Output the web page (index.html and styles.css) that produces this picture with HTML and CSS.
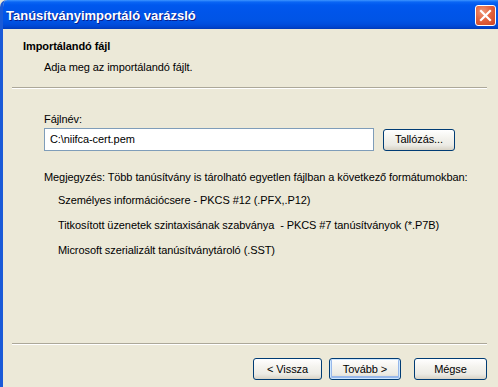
FILE: index.html
```html
<!DOCTYPE html>
<html lang="hu">
<head>
<meta charset="utf-8">
<title>Tanúsítványimportáló varázsló</title>
<link rel="stylesheet" href="styles.css">
</head>
<body>
<div class="window">
  <div class="titlebar">
    <span class="title">Tanúsítványimportáló varázsló</span>
    <span class="close" aria-label="Bezárás">
      <svg width="21" height="21" viewBox="0 0 21 21">
        <path d="M6 6 L15 15 M15 6 L6 15" stroke="#fff" stroke-width="2.2" stroke-linecap="square"/>
      </svg>
    </span>
  </div>
  <div class="client">
    <div class="header">
      <div class="h-title">Importálandó fájl</div>
      <div class="h-sub">Adja meg az importálandó fájlt.</div>
    </div>
    <div class="sep"></div>
    <div class="main">
      <div class="label">Fájlnév:</div>
      <div class="file-row">
        <div class="input">C:\niifca-cert.pem</div>
        <div class="btn browse">Tallózás...</div>
      </div>
      <div class="note">Megjegyzés: Több tanúsítvány is tárolható egyetlen fájlban a következő formátumokban:</div>
      <ul class="formats">
        <li>Személyes információcsere - PKCS #12 (.PFX,.P12)</li>
        <li>Titkosított üzenetek szintaxisának szabványa  - PKCS #7 tanúsítványok (*.P7B)</li>
        <li>Microsoft szerializált tanúsítványtároló (.SST)</li>
      </ul>
    </div>
    <div class="sep"></div>
    <div class="buttons">
      <div class="btn back">&lt; Vissza</div>
      <div class="btn next default">Tovább &gt;</div>
      <div class="btn cancel">Mégse</div>
    </div>
  </div>
</div>
</body>
</html>
```

FILE: styles.css
```css
* { box-sizing: border-box; }
html, body {
  margin: 0;
  padding: 0;
  width: 498px;
  height: 387px;
  overflow: hidden;
  background: #ece9d8;
}
.window {
  width: 498px;
  height: 387px;
  display: flex;
  flex-direction: column;
  font-family: "Liberation Sans", Arial, sans-serif;
  font-size: 11px;
  letter-spacing: -0.08px;
  color: #000;
  background: #ece9d8;
  border-left: 3px solid #1a5ad8;
  border-top-left-radius: 7px;
  overflow: hidden;
}
.titlebar {
  height: 29px;
  flex: 0 0 29px;
  margin-left: -3px;
  padding-left: 6px;
  padding-right: 2px;
  display: flex;
  align-items: center;
  justify-content: space-between;
  border-top-left-radius: 7px;
  background: linear-gradient(to bottom,
    #3d95ff 0px, #0a66f5 2px, #0058ee 5px, #0055ea 12px,
    #0054e6 20px, #004ede 24px, #0045cf 27px, #003ab8 29px);
}
.title {
  color: #fff;
  font-family: "Liberation Sans", Arial, sans-serif;
  font-weight: bold;
  font-size: 13px;
  letter-spacing: 0;
  text-shadow: 1px 1px 0 #0a1e8c;
  padding-top: 1px;
}
.close {
  width: 21px;
  height: 21px;
  border: 1px solid #fff;
  border-radius: 3px;
  background: radial-gradient(circle at 35% 30%, #ef9878 0, #e3643f 45%, #cc4222 100%);
  display: flex;
  align-items: center;
  justify-content: center;
  margin-top: 1px;
}
.close svg { display: block; margin: -1px; }
.client {
  flex: 1;
  display: flex;
  flex-direction: column;
  padding: 0 11px 0 9px;
}
.header {
  padding-top: 11px;
  height: 58px;
}
.h-title {
  font-weight: bold;
  line-height: 13px;
  padding-left: 11px;
}
.h-sub {
  line-height: 13px;
  margin-top: 8px;
  padding-left: 32px;
}
.sep {
  height: 2px;
  border-top: 1px solid #aca899;
  border-bottom: 1px solid #fff;
}
.main {
  height: 254px;
  padding: 24px 0 0 32px;
}
.label { line-height: 13px; }
.file-row {
  margin-top: 2px;
  display: flex;
  align-items: center;
  gap: 9px;
}
.input {
  width: 330px;
  height: 23px;
  border: 1px solid #7f9db9;
  background: #fff;
  line-height: 21px;
  padding-left: 5px;
}
.btn {
  height: 22px;
  border: 1px solid #003c74;
  border-radius: 3px;
  background: linear-gradient(to bottom, #ffffff 0%, #f4f3ee 40%, #ecebe5 75%, #d8d3c6 100%);
  display: flex;
  align-items: center;
  justify-content: center;
  line-height: 13px;
}
.browse { width: 72px; }
.note {
  margin-top: 20px;
  line-height: 13px;
}
.formats {
  list-style: none;
  margin: 0;
  padding: 0 0 0 14px;
}
.formats li {
  line-height: 13px;
  margin-top: 12px;
  white-space: pre;
}
.formats li:first-child { margin-top: 10px; }
.buttons {
  display: flex;
  justify-content: flex-end;
  padding-top: 13px;
}
.back { width: 69px; }
.next { width: 72px; margin-left: 7px; }
.cancel { width: 73px; margin-left: 13px; }
.default {
  box-shadow: inset 0 0 0 1px #cee7ff, inset 0 -1px 0 2px #98b8ea;
}
```
